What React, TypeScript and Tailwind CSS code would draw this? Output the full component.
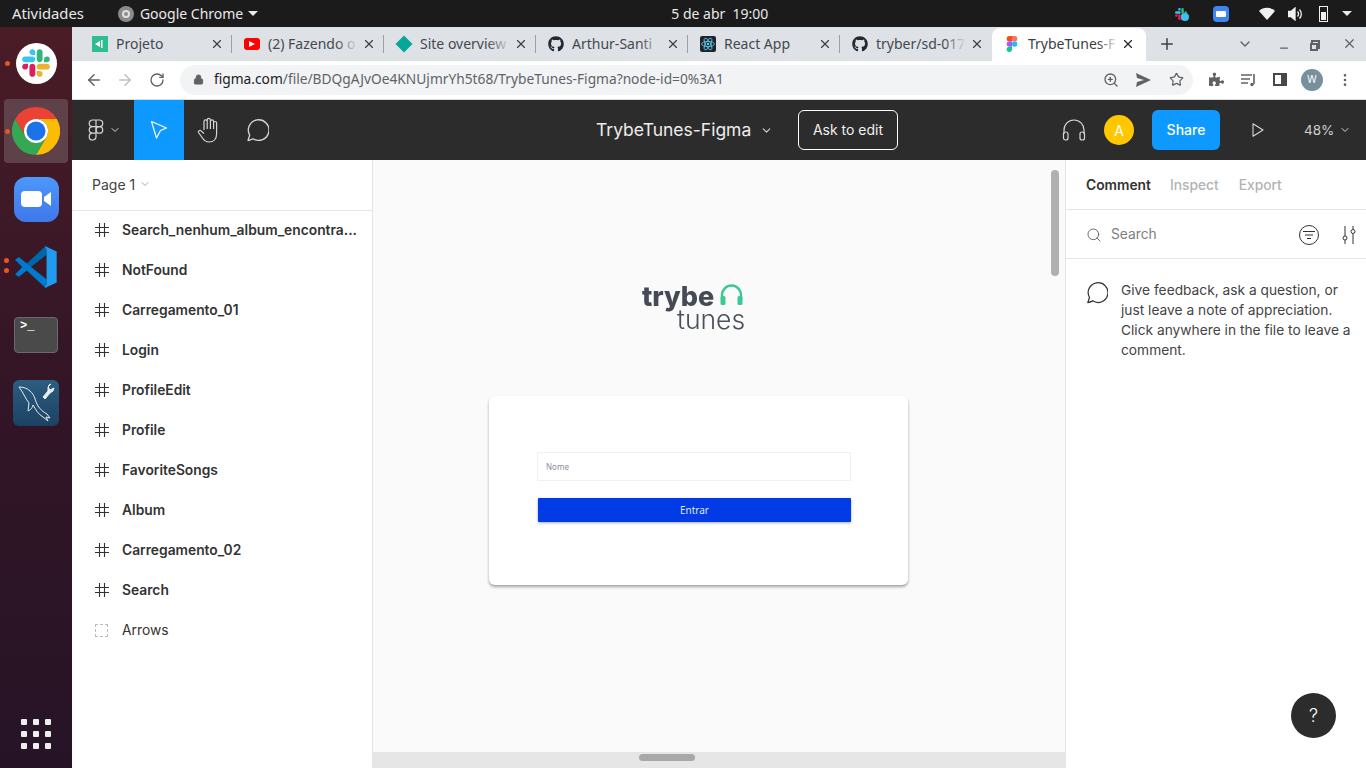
import React from 'react';
import {
  ArrowLeft,
  ArrowRight,
  ChevronDown,
  EllipsisVertical,
  Lock,
  Minus,
  Plus,
  RotateCw,
  Search,
  Star,
  X,
  ZoomIn,
} from 'lucide-react';
import { FaGithub, FaPuzzlePiece } from 'react-icons/fa';

const SlackLogo = ({ size }: { size: number }) => (
  <svg width={size} height={size} viewBox="0 0 127 127">
    <path d="M27.2 80c0 7.3-5.9 13.2-13.2 13.2C6.7 93.2.8 87.3.8 80c0-7.3 5.9-13.2 13.2-13.2h13.2V80zm6.6 0c0-7.3 5.9-13.2 13.2-13.2 7.3 0 13.2 5.9 13.2 13.2v33c0 7.3-5.9 13.2-13.2 13.2-7.3 0-13.2-5.9-13.2-13.2V80z" fill="#E01E5A" />
    <path d="M47 27c-7.3 0-13.2-5.9-13.2-13.2C33.8 6.5 39.7.6 47 .6c7.3 0 13.2 5.9 13.2 13.2V27H47zm0 6.7c7.3 0 13.2 5.9 13.2 13.2 0 7.3-5.9 13.2-13.2 13.2H13.9C6.6 60.1.7 54.2.7 46.9c0-7.3 5.9-13.2 13.2-13.2H47z" fill="#36C5F0" />
    <path d="M99.9 46.9c0-7.3 5.9-13.2 13.2-13.2 7.3 0 13.2 5.9 13.2 13.2 0 7.3-5.9 13.2-13.2 13.2H99.9V46.9zm-6.6 0c0 7.3-5.9 13.2-13.2 13.2-7.3 0-13.2-5.9-13.2-13.2V13.8C66.9 6.5 72.8.6 80.1.6c7.3 0 13.2 5.9 13.2 13.2v33.1z" fill="#2EB67D" />
    <path d="M80.1 99.8c7.3 0 13.2 5.9 13.2 13.2 0 7.3-5.9 13.2-13.2 13.2-7.3 0-13.2-5.9-13.2-13.2V99.8h13.2zm0-6.6c-7.3 0-13.2-5.9-13.2-13.2 0-7.3 5.9-13.2 13.2-13.2h33.1c7.3 0 13.2 5.9 13.2 13.2 0 7.3-5.9 13.2-13.2 13.2H80.1z" fill="#ECB22E" />
  </svg>
);

const ChromeLogo = () => (
  <svg width={48} height={48} viewBox="0 0 48 48">
    <path d="M24 0A24 24 0 0 0 3.2 12L13.6 30A12 12 0 0 1 24 12H44.8A24 24 0 0 0 24 0z" fill="#ea4335" />
    <path d="M44.8 12H24A12 12 0 0 1 34.4 30L24 48A24 24 0 0 0 44.8 12z" fill="#fbbc04" />
    <path d="M3.2 12A24 24 0 0 0 24 48L34.4 30A12 12 0 0 1 13.6 30z" fill="#34a853" />
    <circle cx="24" cy="24" r="12" fill="#fff" />
    <circle cx="24" cy="24" r="9.5" fill="#1a73e8" />
  </svg>
);

const VsCodeLogo = () => (
  <svg width={44} height={44} viewBox="0 0 100 100">
    <path d="M3 66L10 72L74 22V3L70 4L29 42L11 28L3 33L19 50z" fill="#0065a9" />
    <path d="M3 34L11 28L74 78V97L70 96L29 58L11 72L3 67L19 50z" fill="#007acc" />
    <path d="M70 2L97 15V85L70 98L74 90V10z" fill="#1f9cf0" />
  </svg>
);

const FigmaOutline = () => (
  <svg width={16} height={22} viewBox="0 0 16 22" fill="none" stroke="#d6d6d6" strokeWidth="1.2">
    <path d="M8 1H4.5a3.3 3.3 0 0 0 0 6.6H8zM8 1h3.5a3.3 3.3 0 0 1 0 6.6H8zM8 7.6H4.5a3.3 3.3 0 0 0 0 6.6H8zM8 14.2H4.5A3.4 3.4 0 1 0 8 17.6z" />
    <circle cx="11.4" cy="10.9" r="3.3" />
  </svg>
);

const FigmaColor = () => (
  <svg width={16} height={16} viewBox="0 0 12 18" className="shrink-0">
    <path d="M3 0h3v6H3a3 3 0 0 1 0-6z" fill="#f24e1e" />
    <path d="M6 0h3a3 3 0 0 1 0 6H6z" fill="#ff7262" />
    <path d="M3 6h3v6H3a3 3 0 0 1 0-6z" fill="#a259ff" />
    <circle cx="9" cy="9" r="3" fill="#1abcfe" />
    <path d="M3 12h3v3a3 3 0 1 1-3-3z" fill="#0acf83" />
  </svg>
);

const CommentBubble = ({ size, color }: { size: number; color: string }) => (
  <svg width={size} height={size} viewBox="0 0 24 24" fill="none" stroke={color} strokeWidth="1.3">
    <path d="M3 22.5l1.7-5.3A10.3 10.3 0 1 1 8 20.7c-1.5.8-3.2 1.5-5 1.8z" strokeLinejoin="round" />
  </svg>
);

const HashIcon = () => (
  <svg width={14} height={14} viewBox="0 0 14 14" fill="none" stroke="#333" strokeWidth="1.1">
    <path d="M4.5 0v14M9.5 0v14M0 4.5h14M0 9.5h14" />
  </svg>
);

const tabs = [
  {
    title: 'Projeto',
    icon: (
      <span className="flex h-4 w-4 shrink-0 items-center justify-center bg-[#2dbd8f]">
        <svg width={10} height={10} viewBox="0 0 10 10" fill="#fff">
          <path d="M0 5l5-3v6zM6 1h1.5v8H6z" />
        </svg>
      </span>
    ),
  },
  {
    title: '(2) Fazendo o',
    icon: (
      <span className="flex h-[12px] w-4 shrink-0 items-center justify-center rounded-[3px] bg-[#ff0000]">
        <svg width={6} height={6} viewBox="0 0 6 6" fill="#fff">
          <path d="M0 0l6 3-6 3z" />
        </svg>
      </span>
    ),
  },
  {
    title: 'Site overview',
    icon: <span className="mx-[2px] h-3 w-3 shrink-0 rotate-45 bg-[#05a79b]" />,
  },
  { title: 'Arthur-Santi', icon: <FaGithub size={16} className="shrink-0 text-[#24292f]" /> },
  {
    title: 'React App',
    icon: (
      <span className="flex h-4 w-4 shrink-0 items-center justify-center rounded-[2px] bg-[#20232a]">
        <svg width={14} height={14} viewBox="0 0 24 24" fill="none" stroke="#61dafb" strokeWidth="1.3">
          <ellipse cx="12" cy="12" rx="11" ry="4.4" />
          <ellipse cx="12" cy="12" rx="11" ry="4.4" transform="rotate(60 12 12)" />
          <ellipse cx="12" cy="12" rx="11" ry="4.4" transform="rotate(120 12 12)" />
          <circle cx="12" cy="12" r="2" fill="#61dafb" stroke="none" />
        </svg>
      </span>
    ),
  },
  { title: 'tryber/sd-017', icon: <FaGithub size={16} className="shrink-0 text-[#24292f]" /> },
];

const frames = [
  { name: 'Search_nenhum_album_encontra...', semibold: true },
  { name: 'NotFound', semibold: true },
  { name: 'Carregamento_01', semibold: true },
  { name: 'Login', semibold: true },
  { name: 'ProfileEdit', semibold: true },
  { name: 'Profile', semibold: true },
  { name: 'FavoriteSongs', semibold: true },
  { name: 'Album', semibold: true },
  { name: 'Carregamento_02', semibold: true },
  { name: 'Search', semibold: true },
  { name: 'Arrows', semibold: false },
];

function Dock() {
  return (
    <div className="flex w-[72px] shrink-0 flex-col items-center bg-gradient-to-b from-[#4a1c26] via-[#321526] to-[#261426] pt-[2px]">
      <div className="relative flex h-[68px] w-full items-center justify-center">
        <span className="absolute left-[5px] top-[32px] h-[5px] w-[5px] rounded-full bg-[#e95420]" />
        <div className="flex h-[41px] w-[41px] items-center justify-center rounded-full bg-white">
          <SlackLogo size={28} />
        </div>
      </div>
      <div className="relative flex h-[68px] w-full items-center justify-center">
        <div className="flex h-[64px] w-[64px] items-center justify-center rounded-[4px] bg-[#5f4149]">
          <ChromeLogo />
        </div>
        <span className="absolute left-[5px] top-[32px] h-[5px] w-[5px] rounded-full bg-[#e95420]" />
      </div>
      <div className="flex h-[68px] w-full items-center justify-center">
        <div className="flex h-[45px] w-[45px] items-center justify-center gap-[2px] rounded-[12px] bg-gradient-to-b from-[#4d97fb] to-[#3f78ea]">
          <span className="h-[16px] w-[21px] rounded-[4px] bg-white" />
          <svg width={7} height={16} viewBox="0 0 7 16" fill="#fff">
            <path d="M0 6l7-5v14L0 10z" />
          </svg>
        </div>
      </div>
      <div className="relative flex h-[68px] w-full items-center justify-center">
        <span className="absolute left-[4px] top-[25px] h-[5px] w-[5px] rounded-full bg-[#e95420]" />
        <span className="absolute left-[4px] top-[35px] h-[5px] w-[5px] rounded-full bg-[#e95420]" />
        <VsCodeLogo />
      </div>
      <div className="flex h-[68px] w-full items-center justify-center">
        <div className="h-[36px] w-[44px] rounded-[4px] border border-[#6a6a6a] bg-[#4a4a4a] pl-[5px] pt-[1px] font-['Liberation_Mono',monospace] text-[12px] font-bold leading-[15px] text-white">
          {'>_'}
        </div>
      </div>
      <div className="flex h-[68px] w-full items-center justify-center">
        <div className="flex h-[46px] w-[46px] items-center justify-center rounded-[6px] bg-gradient-to-b from-[#2c5d80] to-[#1c4263]">
          <svg width={46} height={46} viewBox="0 0 46 46" fill="none" stroke="#e8eef2" strokeWidth="1">
            <path d="M6 7c4 0 8 1 11 4 5 4 5 10 8 15 2 3 5 6 9 8l3 4-4-1 2 4-5-4c-5-3-7-7-10-12-1 4-3 5-5 6l1-8C12 18 10 12 6 7z" />
            <path d="M38 4l-3 3 2 3 4-2-1 3-3 2-5 6-2-2 5-6 0-3 1-3z" fill="#e8eef2" />
          </svg>
        </div>
      </div>
      <div className="mb-[19px] mt-auto grid grid-cols-3 gap-[6px]">
        {Array.from({ length: 9 }).map((_, i) => (
          <span key={i} className="h-[6px] w-[6px] rounded-[1px] bg-[#eeeeee]" />
        ))}
      </div>
    </div>
  );
}

function TabBar() {
  return (
    <div className="flex h-[34px] shrink-0 items-end bg-[#dee1e6] pl-[8px] font-['Noto_Sans',sans-serif] text-[14px] text-[#45494e]">
      {tabs.map((tab, i) => (
        <React.Fragment key={tab.title}>
          <div className="flex h-[33px] w-[151px] shrink-0 items-center pb-[2px] pl-[12px]">
            {tab.icon}
            <div className="relative ml-[8px] w-[90px] overflow-hidden whitespace-nowrap">
              {tab.title}
              <span className="absolute right-0 top-0 h-full w-[22px] bg-gradient-to-r from-transparent to-[#dee1e6]" />
            </div>
            <X size={14} className="ml-[4px] shrink-0 text-[#3c4043]" />
          </div>
          {i < tabs.length - 1 && <span className="mb-[8px] h-[18px] w-px shrink-0 bg-[#9aa0a6]" />}
        </React.Fragment>
      ))}
      <div className="ml-[1px] flex h-[33px] w-[154px] shrink-0 items-center rounded-t-[8px] bg-white pb-[2px] pl-[12px] text-[#3c4043]">
        <FigmaColor />
        <div className="relative ml-[8px] w-[90px] overflow-hidden whitespace-nowrap">
          TrybeTunes-F
          <span className="absolute right-0 top-0 h-full w-[20px] bg-gradient-to-r from-transparent to-white" />
        </div>
        <X size={14} className="ml-[3px] shrink-0 text-[#202124]" />
      </div>
      <Plus size={18} className="mb-[8px] ml-[12px] shrink-0 text-[#3c4043]" />
      <ChevronDown size={16} className="mb-[9px] ml-[61px] shrink-0 text-[#5f6368]" />
      <Minus size={12} className="mb-[7px] ml-[25px] shrink-0 text-[#5f6368]" strokeWidth={2.5} />
      <span className="relative mb-[12px] ml-[21px] h-[9px] w-[9px] shrink-0 border-2 border-[#5f6368]">
        <span className="absolute -bottom-[4px] -left-[3px] h-[8px] w-[8px] border-2 border-[#5f6368] bg-[#dee1e6]" />
      </span>
      <X size={15} className="mb-[10px] ml-[22px] shrink-0 text-[#5f6368]" />
    </div>
  );
}

function Toolbar() {
  return (
    <div className="flex h-[39px] shrink-0 items-center border-b border-[#dadce0] bg-white pb-[1px] pl-[13px] text-[#5f6368]">
      <ArrowLeft size={18} className="text-[#5f6368]" />
      <ArrowRight size={18} className="ml-[13px] text-[#bdc1c6]" />
      <RotateCw size={16} className="ml-[15px]" />
      <div className="ml-[15px] flex h-[30px] w-[1013px] items-center rounded-full bg-[#f1f3f4] pl-[13px] font-['Noto_Sans',sans-serif] text-[13.75px]">
        <Lock size={11} fill="#5f6368" className="shrink-0" />
        <span className="ml-[10px] w-[880px] whitespace-nowrap text-[#5f6368]">
          <span className="text-[#202124]">figma.com</span>/file/BDQgAJvOe4KNUjmrYh5t68/TrybeTunes-Figma?node-id=0%3A1
        </span>
        <ZoomIn size={16} className="ml-[9px] shrink-0" />
        <svg width={17} height={14} viewBox="0 0 17 14" fill="#5f6368" className="ml-[16px] shrink-0">
          <path d="M1 0l15 7-15 7 1-5 7-2-7-2z" />
        </svg>
        <Star size={15} className="ml-[17px] shrink-0" />
      </div>
      <FaPuzzlePiece size={15} className="ml-[16px] shrink-0" />
      <svg width={16} height={14} viewBox="0 0 16 14" fill="none" stroke="#5f6368" strokeWidth="1.6" className="ml-[17px] shrink-0">
        <path d="M0 2h11M0 6h9M0 10h7M13 1v10" />
        <circle cx="11" cy="11.5" r="1.7" fill="#5f6368" stroke="none" />
      </svg>
      <span className="ml-[16px] flex h-[13px] w-[14px] shrink-0 justify-end border-2 border-[#45494e]">
        <span className="h-full w-[4px] bg-[#45494e]" />
      </span>
      <span className="ml-[14px] flex h-[22px] w-[22px] shrink-0 items-center justify-center rounded-full bg-[#78909c] font-['Noto_Sans',sans-serif] text-[10px] text-white">
        W
      </span>
      <EllipsisVertical size={16} className="ml-[14px] shrink-0" />
    </div>
  );
}

function FigmaHeader() {
  return (
    <div className="flex h-[60px] shrink-0 items-center bg-[#2c2c2c] font-['Inter',sans-serif] text-white">
      <div className="ml-[16px] flex w-[46px] items-center">
        <FigmaOutline />
        <ChevronDown size={12} className="ml-[5px] text-[#d6d6d6]" />
      </div>
      <div className="flex h-full w-[50px] items-center justify-center bg-[#0d99ff]">
        <svg width={18} height={20} viewBox="0 0 18 20" fill="none" stroke="#fff" strokeWidth="1.2">
          <path d="M1.5 1.5L16.5 8l-6 2.5L6.5 18z" strokeLinejoin="round" />
        </svg>
      </div>
      <svg width={24} height={26} viewBox="0 0 24 26" fill="none" stroke="#d6d6d6" strokeWidth="1.2" className="ml-[13px]">
        <path d="M7 13V4.5a1.6 1.6 0 0 1 3.2 0V3a1.6 1.6 0 0 1 3.2 0v1.5a1.6 1.6 0 0 1 3.2 0V6a1.5 1.5 0 0 1 3 0v11c0 5-3 8-7.5 8-4 0-5.5-2-7-4.5L1.5 15.5c-.8-1.4 1.4-2.8 2.6-1.6L7 16.5M10.2 4.5V12M13.4 4.5V12M16.6 5V12" strokeLinejoin="round" />
      </svg>
      <span className="ml-[24px]">
        <CommentBubble size={24} color="#d6d6d6" />
      </span>
      <span className="ml-[327px] w-[154px] whitespace-nowrap text-[17.5px] text-[#ececec]">TrybeTunes-Figma</span>
      <ChevronDown size={13} className="ml-[10px] text-[#d6d6d6]" />
      <div className="ml-[25px] flex h-[40px] w-[100px] items-center justify-center rounded-[6px] border border-white pb-[2px] text-[14px] font-normal text-[#f0f0f0]">
        Ask to edit
      </div>
      <svg width={24} height={22} viewBox="0 0 24 22" fill="none" stroke="#d6d6d6" strokeWidth="1.2" className="ml-[164px]">
        <path d="M2 15V11a10 10 0 0 1 20 0v4" />
        <rect x="1.5" y="13" width="4.5" height="8" rx="2" />
        <rect x="18" y="13" width="4.5" height="8" rx="2" />
      </svg>
      <span className="ml-[18px] flex h-[30px] w-[30px] items-center justify-center rounded-full bg-[#ffc700] text-[14px] text-white">
        A
      </span>
      <div className="ml-[18px] flex h-[40px] w-[68px] items-center justify-center rounded-[6px] bg-[#0d99ff] pb-[2px] text-[14px] font-medium">
        Share
      </div>
      <svg width={12} height={14} viewBox="0 0 12 14" fill="none" stroke="#d6d6d6" strokeWidth="1.1" className="ml-[32px]">
        <path d="M1 .8L11 7 1 13.2z" strokeLinejoin="round" />
      </svg>
      <span className="ml-[40px] text-[13.5px] text-[#d0d0d0]">48%</span>
      <ChevronDown size={12} className="ml-[5px] text-[#d6d6d6]" />
    </div>
  );
}

function LayersPanel() {
  return (
    <div className="w-[301px] shrink-0 border-r border-[#e5e5e5] bg-white font-['Inter',sans-serif]">
      <div className="flex h-[51px] items-center border-b border-[#e5e5e5] pb-[2px] pl-[20px] text-[14px] text-[#444]">
        Page 1
        <ChevronDown size={12} className="ml-[4px] text-[#aaa]" />
      </div>
      <div className="-mt-px">
        {frames.map((frame) => (
          <div key={frame.name} className="flex h-[40px] items-center pl-[23px] text-[13.8px] text-[#333]">
            {frame.semibold ? (
              <HashIcon />
            ) : (
              <span className="h-[13px] w-[13px] border border-dashed border-[#bbb]" />
            )}
            <span className={frame.semibold ? 'ml-[13px] font-semibold' : 'ml-[14px]'}>{frame.name}</span>
          </div>
        ))}
      </div>
    </div>
  );
}

function Canvas() {
  return (
    <div className="relative flex min-w-0 flex-1 flex-col bg-[#fafafa]">
      <div className="flex-1 pl-[116px] pt-[120px]">
        <div className="ml-[153px] h-[50px] w-[110px] blur-[0.3px]">
          <div className="flex h-[28px] items-center pt-[6px] font-['Inter',sans-serif] text-[27px] font-extrabold leading-[22px] text-[#454a55]">
            trybe
            <svg width={25} height={22} viewBox="0 0 24 22" fill="none" className="-mt-[4px] ml-[5px]">
              <path d="M2.5 15V11a9.5 9.5 0 0 1 19 0v4" stroke="#3cc794" strokeWidth="2.4" />
              <rect x="1" y="12" width="5" height="9" rx="1.5" fill="#3cc794" />
              <rect x="18" y="12" width="5" height="9" rx="1.5" fill="#3cc794" />
            </svg>
          </div>
          <div className="h-[22px] pl-[35px] font-['Inter',sans-serif] text-[26.5px] font-light leading-[22px] text-[#4a505a]">
            tunes
          </div>
        </div>
        <div className="mt-[66px] h-[189px] w-[419px] rounded-[6px] bg-white px-[48px] pt-[56px] shadow-[0_2px_3px_rgba(0,0,0,0.35)]">
          <div className="flex h-[29px] w-[314px] items-center border border-[#f0f0f4] pl-[8px] font-['Noto_Sans',sans-serif] text-[8px] text-[#8a8d99]">
            Nome
          </div>
          <div className="ml-[1px] mt-[17px] flex h-[24px] w-[313px] items-center justify-center rounded-[1px] bg-[#003be5] font-['Noto_Sans',sans-serif] text-[10px] text-[#dfe6ff] shadow-[0_1px_3px_rgba(0,0,0,0.35)]">
            Entrar
          </div>
        </div>
      </div>
      <div className="flex h-[16px] shrink-0 items-start bg-[#e6e6e6] pl-[266px] pt-[2px]">
        <span className="h-[7px] w-[56px] rounded-full bg-[#a8a8a8]" />
      </div>
      <span className="absolute right-[6px] top-[10px] h-[106px] w-[8px] rounded-full bg-[#b0b0b0]" />
    </div>
  );
}

function CommentsPanel() {
  return (
    <div className="relative w-[301px] shrink-0 border-l border-[#e5e5e5] bg-white font-['Inter',sans-serif]">
      <div className="flex h-[50px] items-center gap-[19px] border-b border-[#e5e5e5] pl-[20px] pt-[1px] text-[13.8px] text-[#b3b3b3]">
        <span className="font-semibold text-[#333]">Comment</span>
        <span className="font-medium">Inspect</span>
        <span className="ml-[1px] font-medium">Export</span>
      </div>
      <div className="flex h-[49px] items-center border-b border-[#e5e5e5] pl-[20px] pt-[1px] text-[13.8px] text-[#808080]">
        <Search size={16} strokeWidth={1.3} className="text-[#555]" />
        <span className="ml-[9px]">Search</span>
        <span className="ml-[142px] flex h-[20px] w-[20px] items-center justify-center rounded-full border border-[#333]">
          <svg width={12} height={8} viewBox="0 0 12 8" stroke="#333" strokeWidth="1">
            <path d="M0 .5h12M2 4h8M4 7.5h4" />
          </svg>
        </span>
        <svg width={16} height={18} viewBox="0 0 16 18" fill="none" stroke="#333" strokeWidth="1" className="ml-[22px]">
          <path d="M4 0v10M4 14v4M12 0v3M12 8v10" />
          <circle cx="4" cy="12" r="2" />
          <circle cx="12" cy="5.5" r="2" />
        </svg>
      </div>
      <div className="flex pl-[19px] pt-[21px]">
        <span className="shrink-0 pt-[1px]">
          <CommentBubble size={23} color="#333" />
        </span>
        <p className="ml-[13px] w-[240px] text-[13.75px] leading-[20px] text-[#444]">
          Give feedback, ask a question, or just leave a note of appreciation. Click anywhere in the file to leave a comment.
        </p>
      </div>
      <div className="absolute bottom-[30px] right-[30px] flex h-[45px] w-[45px] items-center justify-center rounded-full bg-[#2c2c2c] text-[18px] font-light text-white">
        ?
      </div>
    </div>
  );
}

export default function App() {
  return (
    <div className="flex h-[768px] w-[1366px] flex-col overflow-hidden bg-white">
      <div className="flex h-[27px] shrink-0 items-center bg-[#1b1b1b] pl-[12px] font-['Noto_Sans',sans-serif] text-[14px] text-[#e8e8e8]">
        <span className="text-[14.8px]">Atividades</span>
        <span className="ml-[34px] flex h-[16px] w-[16px] items-center justify-center rounded-full bg-[#8a8a8a]">
          <span className="h-[8px] w-[8px] rounded-full border-2 border-[#e0e0e0]" />
        </span>
        <span className="ml-[6px]">Google Chrome</span>
        <span className="ml-[5px] h-0 w-0 border-x-[5px] border-t-[5px] border-x-transparent border-t-[#e8e8e8]" />
        <span className="ml-[413px] w-[110px] whitespace-pre">5 de abr  19:00</span>
        <span className="relative ml-[392px] flex h-[16px] w-[16px] items-center justify-center">
          <SlackLogo size={12} />
          <span className="absolute bottom-[1px] right-0 h-[8px] w-[8px] rounded-full bg-[#3cc2f0]" />
        </span>
        <span className="ml-[24px] flex h-[16px] w-[16px] items-center justify-center rounded-[4px] bg-[#3d84f5]">
          <span className="h-[6px] w-[10px] rounded-[1px] bg-white" />
        </span>
        <svg width={16} height={13} viewBox="0 0 16 13" fill="#f0f0f0" className="ml-[30px]">
          <path d="M0 4a11.5 11.5 0 0 1 16 0L8 13z" />
        </svg>
        <svg width={14} height={14} viewBox="0 0 14 14" fill="none" stroke="#f0f0f0" strokeWidth="1.3" className="ml-[13px]">
          <path d="M0 4.5h3L7 1v12L3 9.5H0z" fill="#f0f0f0" />
          <path d="M9.5 4.5a3.5 3.5 0 0 1 0 5M11.5 2.5a6.5 6.5 0 0 1 0 9" />
        </svg>
        <span className="ml-[17px] flex h-[16px] w-[9px] items-end border border-[#f0f0f0] p-px">
          <span className="h-[8px] w-full bg-[#f0f0f0]" />
        </span>
        <span className="ml-[14px] h-0 w-0 border-x-[5px] border-t-[5px] border-x-transparent border-t-[#e8e8e8]" />
      </div>
      <div className="flex min-h-0 flex-1">
        <Dock />
        <div className="flex min-w-0 flex-1 flex-col">
          <TabBar />
          <Toolbar />
          <FigmaHeader />
          <div className="flex min-h-0 flex-1">
            <LayersPanel />
            <Canvas />
            <CommentsPanel />
          </div>
        </div>
      </div>
    </div>
  );
}
